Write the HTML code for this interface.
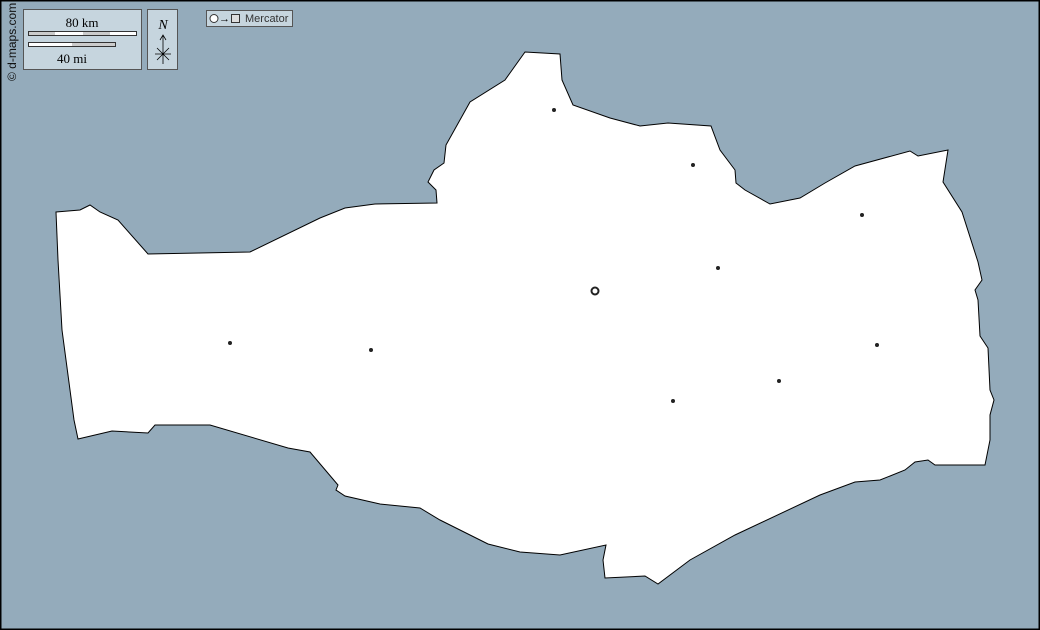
<!DOCTYPE html>
<html><head><meta charset="utf-8"><style>
html,body{margin:0;padding:0}
body{width:1040px;height:630px;overflow:hidden;background:#94abbb;position:relative;font-family:"Liberation Sans",sans-serif}
</style></head><body>
<svg width="1040" height="630" style="position:absolute;left:0;top:0">
<rect x="0.5" y="0.5" width="1039" height="629" fill="#94abbb" stroke="#000" stroke-width="2"/>
<path d="M56,212 L80,210 L90,205 L100,212 L118,220 L148,254 L250,252 L320,218 L345,208 L375,204 L437,203 L436,190 L428,182 L434,170 L444,163 L446,145 L470,102 L505,80 L525,52 L560,54 L562,80 L573,105 L610,118 L640,126 L668,123 L711,126 L720,150 L735,170 L736,183 L745,190 L770,204 L800,198 L825,183 L855,166 L910,151 L918,156 L948,150 L943,182 L962,212 L978,262 L982,280 L975,290 L978,300 L980,336 L988,348 L990,390 L994,400 L990,415 L990,440 L985,465 L935,465 L928,460 L915,462 L905,470 L880,480 L855,482 L820,495 L735,535 L690,560 L658,584 L645,576 L605,578 L603,560 L606,545 L560,555 L520,552 L488,544 L440,520 L420,508 L380,504 L345,496 L336,490 L338,485 L310,452 L288,448 L210,425 L155,425 L148,433 L112,431 L78,439 L74,420 L66,360 L62,330 L58,260 Z" fill="#fff" stroke="#000" stroke-width="1"/>
<g fill="#222">
<circle cx="554" cy="110" r="2"/><circle cx="693" cy="165" r="2"/><circle cx="862" cy="215" r="2"/>
<circle cx="718" cy="268" r="2"/><circle cx="230" cy="343" r="2"/><circle cx="371" cy="350" r="2"/>
<circle cx="877" cy="345" r="2"/><circle cx="779" cy="381" r="2"/><circle cx="673" cy="401" r="2"/>
</g>
<circle cx="595" cy="291" r="3.5" fill="none" stroke="#222" stroke-width="2"/>
<rect x="23.5" y="9.5" width="118" height="60" fill="#c6d5de" stroke="#555"/>
<text x="82" y="27" font-family="Liberation Serif" font-size="13" text-anchor="middle">80 km</text>
<rect x="28.5" y="31.5" width="108" height="4" fill="#fff" stroke="#333"/>
<rect x="29" y="32" width="26" height="3" fill="#ccc"/><rect x="83" y="32" width="27" height="3" fill="#ccc"/>
<rect x="28.5" y="42.5" width="87" height="4" fill="#ccc" stroke="#333"/>
<rect x="29" y="43" width="43" height="3" fill="#fff"/>
<text x="72" y="63" font-family="Liberation Serif" font-size="13" text-anchor="middle">40 mi</text>
<rect x="147.5" y="9.5" width="30" height="60" fill="#c6d5de" stroke="#555"/>
<text x="163" y="29" font-family="Liberation Serif" font-style="italic" font-size="14" text-anchor="middle">N</text>
<path d="M163,36 V64 M160,40 L163,35 L166,40 M155,54 H171 M157,48 L169,60 M169,48 L157,60" stroke="#000" fill="none" stroke-width="0.8"/>
<rect x="206.5" y="10.5" width="86" height="16" fill="#c6d5de" stroke="#555"/>
<circle cx="214" cy="18.5" r="4" fill="#fff" stroke="#333"/>
<text x="219" y="22" font-size="11">→</text>
<rect x="231.5" y="14.5" width="8" height="8" fill="#ddd" stroke="#333"/>
<text x="245" y="22" font-size="11" fill="#333">Mercator</text>
<text transform="translate(16,81) rotate(-90)" font-size="12" fill="#111">© d-maps.com</text>
</svg>
</body></html>
